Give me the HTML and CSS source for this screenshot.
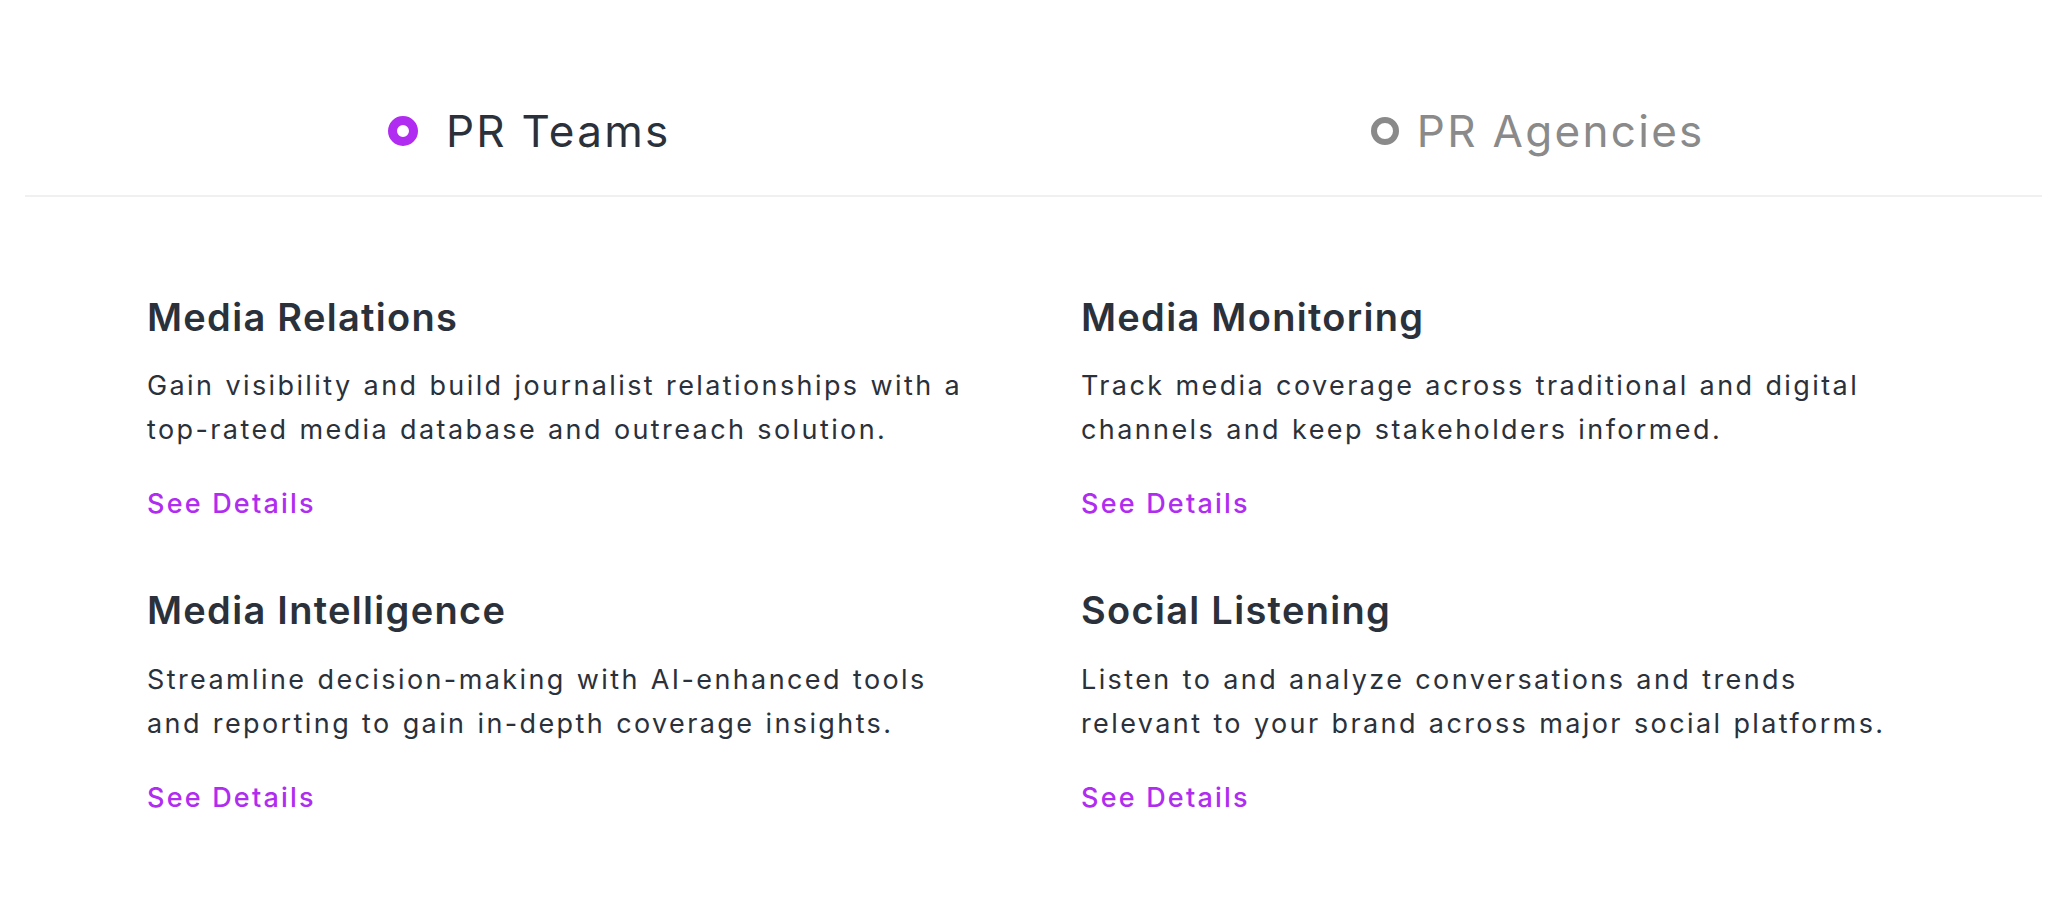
FILE: index.html
```html
<!DOCTYPE html>
<html lang="en">

<head>
    <meta charset="UTF-8">
    <meta name="viewport" content="width=device-width, initial-scale=1.0">
    <title>PR Solutions</title>
    <link rel="stylesheet" href="styles.css">
</head>

<body>
    <div class="tabs">
        <div class="tab active">
            <span class="dot"></span>
            <span class="tab-label">PR Teams</span>
        </div>
        <div class="tab">
            <span class="dot"></span>
            <span class="tab-label">PR Agencies</span>
        </div>
    </div>

    <div class="solutions">
        <div class="solution">
            <h3>Media Relations</h3>
            <p>Gain visibility and build journalist relationships with a<br>top-rated media database and outreach solution.</p>
            <a href="#">See Details</a>
        </div>
        <div class="solution">
            <h3>Media Monitoring</h3>
            <p>Track media coverage across traditional and digital<br>channels and keep stakeholders informed.</p>
            <a href="#">See Details</a>
        </div>
        <div class="solution">
            <h3>Media Intelligence</h3>
            <p>Streamline decision-making with AI-enhanced tools<br>and reporting to gain in-depth coverage insights.</p>
            <a href="#">See Details</a>
        </div>
        <div class="solution">
            <h3>Social Listening</h3>
            <p>Listen to and analyze conversations and trends<br>relevant to your brand across major social platforms.</p>
            <a href="#">See Details</a>
        </div>
    </div>
</body>

</html>
```
FILE: styles.css
```css
body {
    margin: 0;
    background: #fff;
    font-family: Inter, "Noto Sans", sans-serif;
    color: #2b313b;
}

.tabs {
    display: flex;
    margin: 0 6px 0 25px;
    border-bottom: 2px solid #f0f0f0;
}

.tab {
    flex: 1;
    display: flex;
    justify-content: center;
    align-items: center;
    gap: 18px;
    padding: 105px 0 37px;
    color: #8a8a8a;
    cursor: pointer;
}

.tab-label {
    font-size: 44px;
    line-height: 1.2;
    letter-spacing: 2.3px;
}

.dot {
    box-sizing: border-box;
    width: 28px;
    height: 28px;
    border: 6px solid #8a8a8a;
    border-radius: 50%;
}

.tab.active {
    gap: 28px;
    color: #2b313b;
}

.tab.active .dot {
    width: 30px;
    height: 30px;
    border: 9px solid #b02cf0;
}

.solutions {
    display: grid;
    grid-template-columns: 820px 820px;
    column-gap: 114px;
    row-gap: 65px;
    padding: 96px 0 0 147px;
}

.solution h3 {
    margin: 0 0 22px;
    font-size: 38px;
    font-weight: 600;
    line-height: 1.3;
    letter-spacing: 1.3px;
}

.solution p {
    margin: 0 0 34px;
    font-size: 27px;
    line-height: 44px;
    letter-spacing: 2.4px;
    word-spacing: 1px;
    white-space: nowrap;
}

.solution a {
    display: block;
    font-size: 27px;
    font-weight: 500;
    line-height: 1.3;
    letter-spacing: 2.2px;
    color: #b02cf0;
    text-decoration: none;
}
```
